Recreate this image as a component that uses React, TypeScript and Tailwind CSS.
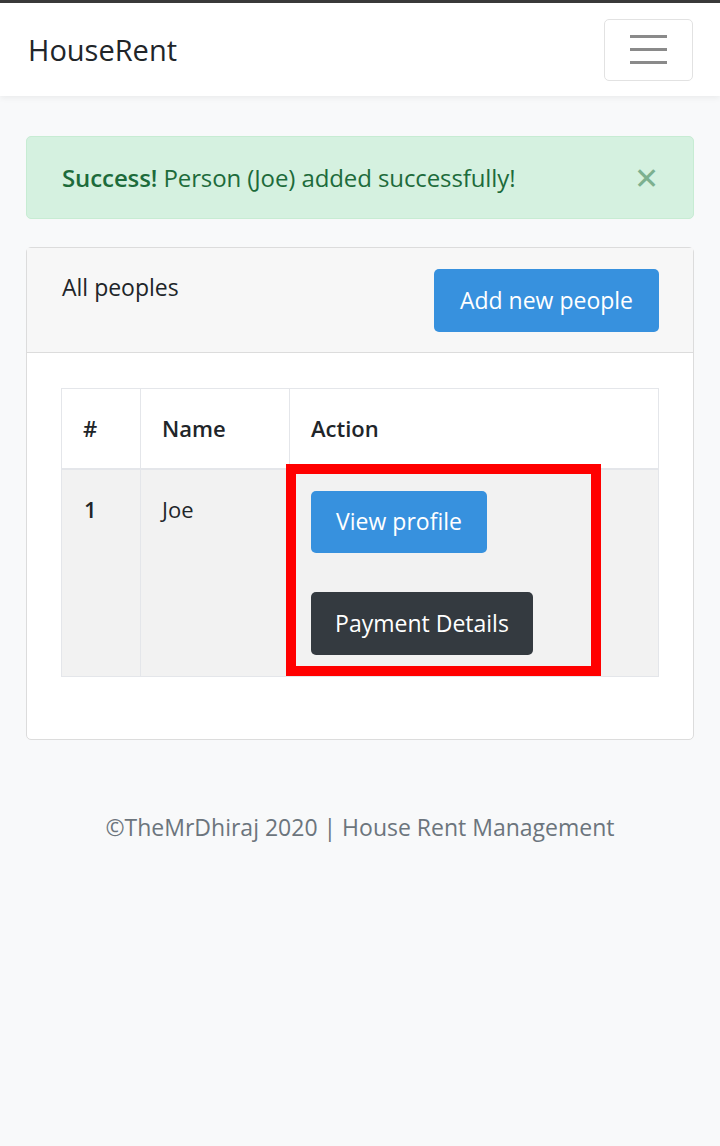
import React from "react";

const font = { fontFamily: "'Open Sans', 'Noto Sans', sans-serif" };

const App = () => {
  return (
    <div
      className="min-h-[1146px] w-[720px] bg-[#f8f9fa] text-[#212529]"
      style={font}
    >
      <div className="h-[3px] bg-[#3a3a3a]" />
      <nav className="relative z-10 flex h-[93px] items-center justify-between bg-white pl-[28px] pr-[27px] shadow-[0_2px_6px_rgba(0,0,0,0.06)]">
        <span className="text-[29px] leading-none">HouseRent</span>
        <button className="flex h-[62px] w-[89px] flex-col items-center justify-center gap-[10px] rounded-[5px] border border-[#e2e2e2]">
          <span className="block h-[3px] w-[37px] bg-[#8a8a8a]" />
          <span className="block h-[3px] w-[37px] bg-[#8a8a8a]" />
          <span className="block h-[3px] w-[37px] bg-[#8a8a8a]" />
        </button>
      </nav>

      <main className="px-[26px] pt-[40px]">
        <div className="flex h-[83px] items-center justify-between rounded-[5px] border border-[#c7ecd3] bg-[#d5f1e0] pl-[35px] pr-[34px] text-[24px] text-[#1d6b3b]">
          <p className="tracking-[-0.1px]">
            <strong className="font-semibold">Success!</strong> Person (Joe)
            added successfully!
          </p>
          <span className="text-[30px] leading-none text-[#7cb08f]">✕</span>
        </div>

        <div className="mt-[28px] rounded-[5px] border border-[#dcdcdc] bg-white">
          <div className="flex h-[105px] items-start justify-between border-b border-[#dcdcdc] bg-[#f7f7f7] pl-[35px] pr-[34px] pt-[21px]">
            <span className="pt-[1px] text-[23px]">All peoples</span>
            <button className="h-[63px] w-[225px] rounded-[5px] bg-[#3791de] text-[23px] text-white">
              Add new people
            </button>
          </div>

          <div className="px-[34px] pb-[62px] pt-[35px]">
            <div className="relative">
              <table className="w-full border-collapse text-left text-[22px]">
                <thead>
                  <tr className="h-[80px]">
                    <th className="w-[79px] border border-b-2 border-[#e4e6ea] pl-[21px] font-semibold">
                      #
                    </th>
                    <th className="w-[149px] border border-b-2 border-[#e4e6ea] pl-[21px] font-semibold">
                      Name
                    </th>
                    <th className="border border-b-2 border-[#e4e6ea] pl-[21px] font-semibold">
                      Action
                    </th>
                  </tr>
                </thead>
                <tbody>
                  <tr className="bg-[#f2f2f2]">
                    <th className="border border-[#e4e6ea] pl-[22px] pt-[23px] align-top font-semibold">
                      1
                    </th>
                    <td className="border border-[#e4e6ea] pl-[21px] pt-[23px] align-top">
                      Joe
                    </td>
                    <td className="border border-[#e4e6ea] pb-[21px] pl-[21px] pt-[21px] align-top text-[23px]">
                      <div className="flex flex-col items-start gap-[39px]">
                        <button className="h-[62px] w-[176px] rounded-[5px] bg-[#3791de] text-white">
                          View profile
                        </button>
                        <button className="h-[63px] w-[222px] rounded-[5px] bg-[#343a40] text-white">
                          Payment Details
                        </button>
                      </div>
                    </td>
                  </tr>
                </tbody>
              </table>
              <div className="pointer-events-none absolute left-[225px] top-[76px] h-[212px] w-[315px] border-[10px] border-[#ff0000]" />
            </div>
          </div>
        </div>

        <p className="mt-[70px] text-center text-[23px] text-[#6c757d]">
          ©TheMrDhiraj 2020 | House Rent Management
        </p>
      </main>
    </div>
  );
};

export default App;
